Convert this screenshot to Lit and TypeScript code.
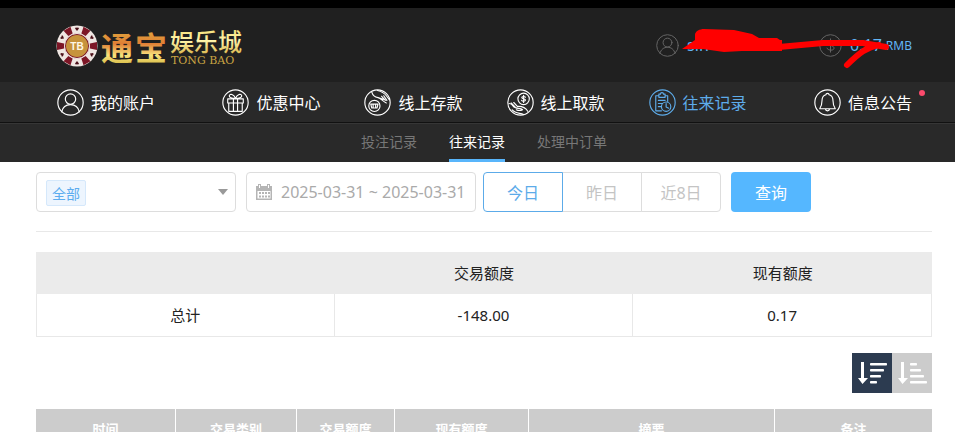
import { LitElement, html, svg, css } from "lit";
import { customElement, property, state } from "lit/decorators.js";
import { classMap } from "lit/directives/class-map.js";

const glyphs = {
  user: svg`<circle cx="13" cy="9.7" r="5"/><path d="M4.5 22c1-4.700 4.500-7 8.500-7s7.500 2.300 8.500 7"/>`,
  gift: svg`<path d="M5.500 9.500h15v4h-15zM6.500 13.500v8h13v-8M11 9.500v12M15 9.500v12M13 9c-1.500-4-5.500-5-6-2.500 0 1.500 2 2.500 6 2.500zM13 9c1.500-4 5.500-5 6-2.500 0 1.500-2 2.500-6 2.500z"/>`,
  deposit: svg`<circle cx="10" cy="16.300" r="5.400"/><path d="M6.500 14.500h7l-1 3.800h-5zM8.800 15v3M11.200 15v3M7.500 3c1 3.500 3 4.800 6 5.300 3 .7 4.500 3.700 8 5.200M13 1.500c4 1 7 3 8.500 5l3 4M13.500 8.300l5 1.700M17 7l3.500 4M19 6.500l3 4.500"/>`,
  withdraw: svg`<circle cx="16" cy="9.500" r="5.500"/><path d="M17.800 7.900c-.6-.9-3.600-1-3.600.4 0 1.600 3.600.8 3.600 2.400 0 1.500-3.200 1.400-3.800.2M16 6v7M2 14c2 0 3 1 4 2.500 2 3 7 1.500 9 3.500-2 1-5 .5-6 0M4 13.500l4 4M6.500 13l3.500 3.800M10 16.800c5-.3 8 1.200 10 4.700M5 20c3 3.500 7 3 11 4.500"/>`,
  record: svg`<path d="M12 21H6.500V6.500h3M15.500 6.500h2.500V12M9.500 5h1.500c0-2 3-2 3 0h1.500v3h-6zM9 11h6.500M9 14h4M9 17h3"/><circle cx="16.500" cy="17" r="4.500"/><path d="M16.500 14v3.300l2.500 1.200"/>`,
  bell: svg`<path d="M13 4.200c1 0 1.500.6 1.600 1.400 2.600.7 3.700 2.900 3.700 5.800 0 4 .7 5.600 2.200 7.600h-15c1.500-2 2.200-3.600 2.200-7.600 0-2.900 1.100-5.100 3.700-5.800.1-.8.6-1.400 1.600-1.400zM11 19.200c.3 2.400 3.700 2.400 4 0"/>`,
  coin: svg`<path d="M16.500 9.500c-1-2.500-7-2.500-7 .5 0 3.500 7.500 2.200 7.500 6 0 3.200-7 3-8 0M13 5.500v15"/>`,
};
type Glyph = keyof typeof glyphs;

@customElement("ring-icon")
class RingIcon extends LitElement {
  @property() name: Glyph = "user";
  static styles = css`
    :host { display: inline-flex; flex: none; width: 27px; height: 27px; }
    svg { width: 100%; height: 100%; fill: none; stroke: currentColor; stroke-width: 1.1; stroke-linejoin: round; stroke-linecap: round; }
  `;
  render() {
    return html`<svg viewBox="0 0 26 26" aria-hidden="true"><circle cx="13" cy="13" r="12.2"/>${glyphs[this.name]}</svg>`;
  }
}

@customElement("brand-logo")
class BrandLogo extends LitElement {
  static styles = css`
    :host { display: block; width: 192px; height: 46px; }
    svg { display: block; width: 100%; height: 100%; overflow: visible; }
    .name { font-family: "Noto Sans CJK SC", sans-serif; font-weight: 700; }
    .big { font-size: 32px; }
    .small { font-size: 24px; font-weight: 500; }
    .latin { font: 11px "DejaVu Serif", serif; }
    .chip { font: bold 10px "Liberation Sans", sans-serif; }
  `;
  render() {
    const spots = [0, 60, 120, 180, 240, 300];
    return html`<svg viewBox="0 0 192 46" role="img" aria-label="通宝娱乐城">
      <defs>
        <linearGradient id="gold" x1="0" y1="0" x2="0" y2="1">
          <stop offset="0.2" stop-color="#e0a03c"/><stop offset="0.45" stop-color="#e07f35"/>
          <stop offset="0.7" stop-color="#f8e27c"/><stop offset="0.9" stop-color="#d8bc48"/>
        </linearGradient>
        <linearGradient id="pale" x1="0" y1="0" x2="0" y2="1">
          <stop offset="0" stop-color="#f0d45c"/><stop offset="0.5" stop-color="#fff5aa"/><stop offset="1" stop-color="#d1a735"/>
        </linearGradient>
      </defs>
      <circle cx="21" cy="24" r="20.500" fill="#efe6e2"/>
      ${spots.map((a) => svg`<g transform="rotate(${a} 21 24)">
        <path d="M17 4h8l-1.500 7h-5z" fill="#7c1626" transform="rotate(30 21 24)"/>
        <path d="M21 9l-2-2.500 1-1.200 1 .8 1-.8 1 1.200z" fill="#4c1019"/>
      </g>`)}
      <circle cx="21" cy="24" r="12.500" fill="#7c1626" stroke="#efe6e2" stroke-width="1"/>
      <circle cx="21" cy="24" r="11" fill="#c6933c"/>
      <text class="chip" x="21" y="28" text-anchor="middle" fill="#fff8e6">TB</text>
      <text class="name big" y="38" fill="url(#gold)"><tspan x="45">通</tspan><tspan x="79">宝</tspan></text>
      <text class="name small" x="114" y="29" fill="url(#pale)">娱乐城</text>
      <text class="latin" x="115" y="42" fill="#c9a443">TONG BAO</text>
    </svg>`;
  }
}

@customElement("app-root")
class AppRoot extends LitElement {
  @state() range = "今日";

  static styles = css`
    :host { display: block; height: 100vh; overflow: hidden; background: #fff; color: #222; font-family: "Noto Sans", "Noto Sans CJK SC", sans-serif; }
    * { box-sizing: border-box; }
    button, input, select { font: inherit; margin: 0; }
    button { cursor: pointer; padding: 0; }
    a { color: inherit; text-decoration: none; }
    header { background: #202020; border-top: 8px solid #000; }
    .top { display: flex; justify-content: space-between; align-items: center; height: 74px; padding: 0 43px 0 56px; }
    .account { position: relative; display: flex; align-items: center; color: #62b5f5; }
    .account ring-icon { width: 23px; height: 23px; color: #666; margin-right: 8px; }
    .who { width: 132px; font-size: 16px; line-height: 24px; }
    .sum { font-size: 16px; line-height: 24px; }
    .unit { font-size: 12px; margin-left: 4px; }
    .scribble { position: absolute; left: 27px; top: 0; width: 214px; height: 44px; overflow: visible; pointer-events: none; }
    nav { display: flex; color: #fff; background: #292929; }
    .main { justify-content: space-between; height: 41px; padding: 0 43px 0 57px; border-bottom: 1px solid #111; font-size: 16px; }
    .group { display: flex; gap: 44px; }
    .item { position: relative; display: flex; align-items: center; gap: 7px; }
    .current { color: #5eacea; }
    .dot { position: absolute; right: -13px; top: 8px; width: 6px; height: 6px; border-radius: 50%; background: #fb4a6c; }
    .sub { justify-content: center; gap: 32px; height: 39px; padding-left: 13px; border-top: 1px solid #363636; font-size: 14px; line-height: 36px; color: #777; }
    .sub .on { color: #fff; border-bottom: 3px solid #58b5fb; }
    main { padding: 10px 23px 0 36px; }
    .filters { display: flex; height: 60px; padding-bottom: 19px; border-bottom: 1px solid #e8e8e8; font-size: 16px; }
    .box { position: relative; display: flex; align-items: center; border: 1px solid #ddd; border-radius: 4px; background: #fff; }
    .kind { width: 200px; margin-right: 10px; }
    .kind::before { content: ""; position: absolute; left: 9px; top: 7px; width: 38px; height: 24px; border: 1px solid #d5e8fb; border-radius: 2px; background: #edf5fe; }
    .kind::after { content: ""; position: absolute; right: 7px; top: 16px; border: 5px solid transparent; border-top: 6px solid #999; border-bottom: 0; pointer-events: none; }
    .kind select { position: relative; appearance: none; width: 100%; height: 38px; padding: 2px 15px 0; border: 0; background: none; color: #5cacef; font-size: 14px; }
    .dates { width: 230px; margin-right: 7px; padding-left: 8px; }
    .dates svg { flex: none; width: 18px; height: 18px; }
    .dates input { flex: 1; min-width: 0; height: 36px; padding: 0 0 0 8px; border: 0; outline: 0; background: none; color: #aaa; }
    .ranges { display: flex; margin-right: 10px; }
    .ranges button { width: 80px; margin-right: -1px; border: 1px solid #ddd; background: #fff; color: #c4c4c4; }
    .ranges button:first-child { border-radius: 4px 0 0 4px; }
    .ranges button:last-child { border-radius: 0 4px 4px 0; margin-right: 0; }
    .ranges .picked { position: relative; border-color: #5cabe9; color: #5cabe9; }
    .query { width: 80px; border: 0; border-radius: 4px; background: #55b7ff; color: #fff; }
    table { width: 100%; table-layout: fixed; border-collapse: separate; border-spacing: 0; }
    .totals { margin-top: 20px; font-size: 15px; line-height: 20px; text-align: center; }
    .totals th { height: 42px; padding: 0; font-weight: 400; background: #ebebeb; }
    .totals td { height: 43px; padding: 0; border: solid #e8e8e8; border-width: 0 1px 1px 0; }
    .totals td:first-child { border-left-width: 1px; }
    .order { display: flex; justify-content: flex-end; margin: 16px 0; }
    .order button { width: 40px; height: 40px; border: 0; background: #ccc; }
    .order .down { background: #2c3b50; }
    .order svg { display: block; width: 40px; height: 40px; fill: #fff; }
    .records { font-size: 13px; color: #fff; }
    .records th { height: 38px; padding: 0; background: #ccc; border-right: 1px solid #fff; }
    .records th:last-child { border-right: 0; }
    .c1 { width: 140px; } .c2 { width: 121px; } .c3 { width: 98px; } .c4 { width: 134px; } .c6 { width: 157px; }
  `;

  item(name: Glyph, label: string, extra: unknown = "") {
    return html`<a href="#" class=${classMap({ item: true, current: name === "record" })}><ring-icon .name=${name}></ring-icon><span>${label}</span>${extra}</a>`;
  }

  sortIcon(widths: number[]) {
    return html`<svg viewBox="0 0 40 40" aria-hidden="true"><path d="M9 9h3v16h4l-5.500 6L6 25h3z"/>
      ${widths.map((w, i) => svg`<rect x="18" y=${10 + i * 6} width=${w} height="2.600" rx="0.800"/>`)}</svg>`;
  }

  render() {
    return html`
      <header>
        <div class="top">
          <brand-logo></brand-logo>
          <div class="account">
            <ring-icon .name=${"user"}></ring-icon><span class="who">sin</span>
            <ring-icon .name=${"coin"}></ring-icon><span class="sum">0.17</span><span class="unit">RMB</span>
            <svg class="scribble" viewBox="0 0 214 44" aria-hidden="true">
              <path fill="#f00" d="M-1 16L12 7V2C12-2 17-4 21-4L51-3 69 1 76 5H94L97 7H99V18L59 18 41 19 20 16z"/>
              <path fill="none" stroke="#f00" stroke-width="6" stroke-linecap="round" stroke-linejoin="round" d="M96 14L140 10H180L203 14 M196 12C184 14 176 20 164 32"/>
            </svg>
          </div>
        </div>
        <nav class="main" aria-label="主菜单">
          ${this.item("user", "我的账户")}
          <div class="group">
            ${this.item("gift", "优惠中心")}${this.item("deposit", "线上存款")}
            ${this.item("withdraw", "线上取款")}${this.item("record", "往来记录")}
          </div>
          ${this.item("bell", "信息公告", html`<i class="dot"></i>`)}
        </nav>
        <nav class="sub" aria-label="记录">
          <a href="#">投注记录</a><a href="#" class="on" aria-current="page">往来记录</a><a href="#">处理中订单</a>
        </nav>
      </header>
      <main>
        <div class="filters">
          <div class="box kind"><select aria-label="类别"><option>全部</option></select></div>
          <label class="box dates">
            <svg viewBox="0 0 18 18" aria-hidden="true">
              <path fill="#b5b5b5" fill-rule="evenodd" d="M1 3h2V1h3v2h6V1h3v2h2v14H1zM2.500 8v7.500h13V8z"/>
              <path stroke="#fff" d="M4.500 2v3M13.500 2v3" fill="none"/>
              <path stroke="#b5b5b5" stroke-width="2" stroke-dasharray="2 1" d="M4 10h11M4 13.500h11"/>
            </svg>
            <input aria-label="日期" .value=${"2025-03-31 ~ 2025-03-31"}>
          </label>
          <div class="ranges">
            ${["今日", "昨日", "近8日"].map((r) => html`<button class=${classMap({ picked: r === this.range })} @click=${() => (this.range = r)}>${r}</button>`)}
          </div>
          <button class="query">查询</button>
        </div>
        <table class="totals">
          <thead><tr><th></th><th>交易额度</th><th>现有额度</th></tr></thead>
          <tbody><tr><td>总计</td><td>-148.00</td><td>0.17</td></tr></tbody>
        </table>
        <div class="order">
          <button class="down" aria-label="降序">${this.sortIcon([17, 14, 11, 7])}</button>
          <button aria-label="升序">${this.sortIcon([7, 11, 14, 17])}</button>
        </div>
        <table class="records">
          <colgroup><col class="c1"><col class="c2"><col class="c3"><col class="c4"><col><col class="c6"></colgroup>
          <thead><tr>${["时间", "交易类别", "交易额度", "现有额度", "摘要", "备注"].map((h) => html`<th>${h}</th>`)}</tr></thead>
        </table>
      </main>`;
  }
}
